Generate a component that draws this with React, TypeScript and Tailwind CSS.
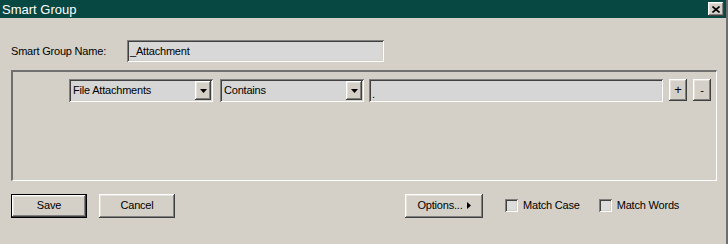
import React from "react";

// Classic Win2k-style 3D edges
const RAISED =
  "shadow-[inset_-1px_-1px_0_#404040,inset_1px_1px_0_#ffffff,inset_-2px_-2px_0_#808080,inset_2px_2px_0_#e4e2dc]";
const SUNKEN =
  "shadow-[inset_1px_1px_0_#808080,inset_-1px_-1px_0_#ffffff,inset_2px_2px_0_#404040,inset_-2px_-2px_0_#d4d0c8]";

function Dropdown({ value }: { value: string }) {
  return (
    <div className={`relative w-[144px] h-[23px] bg-[#d6d6d6] ${SUNKEN} flex items-center`}>
      <span className="pl-[4px] flex-1">{value}</span>
      <div className={`w-[16px] h-[19px] mr-[2px] bg-[#d4d0c8] ${RAISED} flex items-center justify-center`}>
        <svg width="7" height="4" viewBox="0 0 7 4">
          <path d="M0 0h7L3.5 4z" fill="#000" />
        </svg>
      </div>
    </div>
  );
}

function Button({
  label,
  isDefault,
  className = "",
  children,
}: {
  label: string;
  isDefault?: boolean;
  className?: string;
  children?: React.ReactNode;
}) {
  if (isDefault) {
    return (
      <div className={`border border-black ${className}`}>
        <div className={`w-full h-full bg-[#d4d0c8] ${RAISED} flex items-center justify-center`}>
          {label}
        </div>
      </div>
    );
  }
  return (
    <div className={`bg-[#d4d0c8] ${RAISED} flex items-center justify-center ${className}`}>
      {label}
      {children}
    </div>
  );
}

function Checkbox({ label }: { label: string }) {
  return (
    <div className="flex items-center gap-[5px]">
      <div className={`w-[13px] h-[13px] bg-[#dcdcdc] ${SUNKEN}`} />
      <span>{label}</span>
    </div>
  );
}

export default function App() {
  return (
    <div
      className="w-[728px] h-[244px] bg-[#d4d0c8] text-black text-[11px] tracking-[-0.2px] overflow-hidden border-r-2 border-[#6e6e6e] flex flex-col"
      style={{ fontFamily: '"Liberation Sans", Arial, sans-serif' }}
    >
      {/* Title bar */}
      <div className="h-[18px] bg-[#084843] flex items-center justify-between pl-[2px] pr-[2px]">
        <span className="text-white text-[13px] tracking-normal leading-none">Smart Group</span>
        <div className={`w-[16px] h-[14px] bg-[#d4d0c8] ${RAISED} flex items-center justify-center`}>
          <svg width="8" height="7" viewBox="0 0 8 7">
            <path d="M0.5 0.5L7.5 6.5M7.5 0.5L0.5 6.5" stroke="#000" strokeWidth="1.6" />
          </svg>
        </div>
      </div>

      <div className="flex flex-col pl-[11px] pr-[10px]">
        {/* Name row */}
        <div className="flex items-center mt-[22px] h-[22px]">
          <span className="w-[116px]">Smart Group Name:</span>
          <div className={`w-[257px] h-[22px] bg-[#d8d8d8] ${SUNKEN} flex items-center pl-[3px]`}>
            _Attachment
          </div>
        </div>

        {/* Criteria group */}
        <div className="mt-[8px] w-[706px] h-[111px] border-t-2 border-l-2 border-[#707070] border-b border-r border-b-white border-r-white">
          <div className="flex items-start mt-[7px] ml-[56px]">
            <Dropdown value="File Attachments" />
            <div className="w-[7px]" />
            <Dropdown value="Contains" />
            <div className="w-[5px]" />
            <div className={`w-[294px] h-[23px] bg-[#d6d6d6] ${SUNKEN} flex items-end pl-[3px] pb-[2px] leading-none`}>
              .
            </div>
            <Button label="+" className="ml-[6px] w-[18px] h-[22px] text-[13px]" />
            <Button label="-" className="ml-[6px] w-[18px] h-[22px]" />
          </div>
        </div>

        {/* Bottom buttons */}
        <div className="flex items-center mt-[13px] h-[23px]">
          <Button label="Save" isDefault className="w-[76px] h-[24px]" />
          <Button label="Cancel" className="ml-[12px] w-[76px] h-[24px]" />
          <Button label="Options..." className="ml-[230px] w-[78px] h-[24px] gap-[4px]">
            <svg width="4" height="7" viewBox="0 0 4 7">
              <path d="M0 0v7l4-3.5z" fill="#000" />
            </svg>
          </Button>
          <div className="ml-[22px]">
            <Checkbox label="Match Case" />
          </div>
          <div className="ml-[19px]">
            <Checkbox label="Match Words" />
          </div>
        </div>
      </div>
    </div>
  );
}
